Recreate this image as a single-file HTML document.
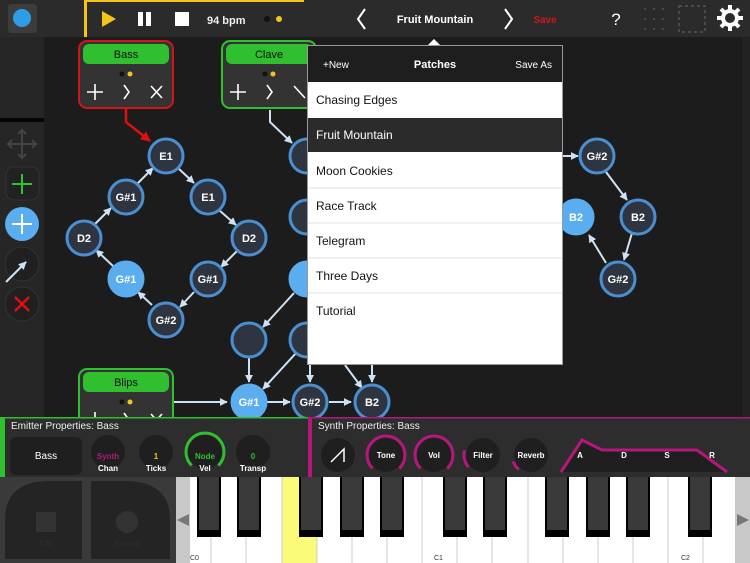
<!DOCTYPE html>
<html><head><meta charset="utf-8"><style>
html,body{margin:0;padding:0;background:#1c1c1c;width:750px;height:563px;overflow:hidden}
svg text{font-family:"Liberation Sans",sans-serif}
</style></head><body>
<svg width="750" height="563" viewBox="0 0 750 563" xmlns="http://www.w3.org/2000/svg">
<defs>
<marker id="a" viewBox="0 0 10 10" refX="9" refY="5" markerWidth="4" markerHeight="4" orient="auto"><path d="M0 0L10 5L0 10z" fill="#cfe2f3"/></marker>
<marker id="r" viewBox="0 0 10 10" refX="9" refY="5" markerWidth="4" markerHeight="4" orient="auto"><path d="M0 0L10 5L0 10z" fill="#e01010"/></marker>
</defs>
<rect width="750" height="563" fill="#1c1c1c"/>
<!-- top bar -->
<rect width="750" height="37" fill="#2b2b2b"/>
<rect x="8" y="4" width="29" height="29" rx="3" fill="#3c3c3c"/>
<circle cx="22" cy="18" r="9" fill="#2f9ce6"/>
<rect x="84" y="0" width="3" height="37" fill="#f2c518"/>
<rect x="84" y="0" width="220" height="2" fill="#f2c518"/>
<path d="M102 11L116 19L102 27z" fill="#f2c518"/>
<rect x="138" y="12" width="5" height="14" fill="#fff"/><rect x="146" y="12" width="5" height="14" fill="#fff"/>
<rect x="175" y="12" width="14" height="14" fill="#fff"/>
<text x="207" y="24" font-size="11" font-weight="bold" fill="#eee">94 bpm</text>
<circle cx="267" cy="19" r="3" fill="#111"/><circle cx="279" cy="19" r="3" fill="#f2c518"/>
<path d="M365 9L358 19L365 29" stroke="#fff" stroke-width="2" fill="none"/>
<text x="435" y="23" font-size="11" font-weight="bold" fill="#fff" text-anchor="middle">Fruit Mountain</text>
<path d="M505 9L512 19L505 29" stroke="#fff" stroke-width="2" fill="none"/>
<text x="545" y="23" font-size="10" font-weight="bold" fill="#d0161a" text-anchor="middle">Save</text>
<text x="616" y="25" font-size="17" fill="#fff" text-anchor="middle">?</text>
<g fill="#555"><circle cx="645" cy="9" r="1"/><circle cx="654" cy="9" r="1"/><circle cx="663" cy="9" r="1"/><circle cx="645" cy="19" r="1"/><circle cx="654" cy="19" r="1"/><circle cx="663" cy="19" r="1"/><circle cx="645" cy="29" r="1"/><circle cx="654" cy="29" r="1"/><circle cx="663" cy="29" r="1"/></g>
<rect x="679" y="6" width="26" height="26" fill="none" stroke="#555" stroke-width="1.5" stroke-dasharray="3 3"/>
<g transform="translate(730 18)" fill="#fff"><circle r="9"/><g stroke="#fff" stroke-width="4"><path d="M0 -13V13M-13 0H13M-9 -9L9 9M-9 9L9 -9"/></g><circle r="5" fill="#2b2b2b"/></g>
<!-- left toolbar -->
<rect x="0" y="37" width="44" height="380" fill="#262626"/>
<rect x="0" y="118" width="44" height="4" fill="#050505"/>
<g stroke="#444" stroke-width="2" fill="none"><path d="M22 130V158M8 144H36M18 134L22 130L26 134M18 154L22 158L26 154M12 140L8 144L12 148M32 140L36 144L32 148"/></g>
<rect x="6" y="167" width="33" height="33" rx="8" fill="#222" stroke="#333"/>
<path d="M22 174V194M12 184H32" stroke="#2fc42f" stroke-width="2"/>
<circle cx="22" cy="224" r="17" fill="#5aaef0"/>
<path d="M22 214V234M12 224H32" stroke="#fff" stroke-width="2"/>
<circle cx="22" cy="264" r="17" fill="#202020" stroke="#333"/>
<path d="M6 282L26 262" stroke="#cfe2f3" stroke-width="2" marker-end="url(#a)"/>
<circle cx="22" cy="304" r="17" fill="#202020" stroke="#333"/>
<path d="M15 297L29 311M29 297L15 311" stroke="#e01010" stroke-width="2.5"/>
<!-- edges -->
<g stroke="#cfe2f3" stroke-width="2" fill="none" marker-end="url(#a)">
<path d="M178 168L194 183"/><path d="M137 184L153 168"/><path d="M219 210L236 225"/><path d="M95 224L111 208"/>
<path d="M237 251L221 267"/><path d="M152 305L138 292"/><path d="M194 292L180 307"/><path d="M113 266L96 250"/>
<path d="M270 110V122L292 143"/><path d="M174 402H227"/><path d="M267 402H290"/><path d="M329 402H351"/>
<path d="M249 358V382"/><path d="M294 293L263 327"/><path d="M297 352L263 389"/><path d="M310 365V382"/><path d="M372 365V382"/><path d="M345 365L362 388"/>
<path d="M562 156H578"/><path d="M606 172L627 200"/><path d="M632 233L624 260"/><path d="M606 263L589 235"/>
</g>
<path d="M126 108V122L150 141" stroke="#e01010" stroke-width="2.5" fill="none" marker-end="url(#r)"/>
<!-- nodes -->
<g font-size="11" fill="#fff" text-anchor="middle" font-weight="bold">
<g stroke="#4a8fd0" stroke-width="3" fill="#2f3540">
<circle cx="166" cy="156" r="17"/><circle cx="126" cy="197" r="17"/><circle cx="208" cy="197" r="17"/><circle cx="84" cy="238" r="17"/><circle cx="249" cy="238" r="17"/><circle cx="208" cy="279" r="17"/><circle cx="166" cy="320" r="17"/><circle cx="249" cy="340" r="17"/><circle cx="310" cy="402" r="17"/><circle cx="372" cy="402" r="17"/><circle cx="307" cy="156" r="17"/><circle cx="307" cy="217" r="17"/><circle cx="307" cy="340" r="17"/><circle cx="597" cy="156" r="17"/><circle cx="638" cy="217" r="17"/><circle cx="618" cy="279" r="17"/>
</g>
<g fill="#5aaef0" stroke="#5aaef0" stroke-width="3"><circle cx="126" cy="279" r="17"/><circle cx="249" cy="402" r="17"/><circle cx="307" cy="279" r="17"/><circle cx="576" cy="217" r="17"/></g>
<text x="166" y="160">E1</text><text x="126" y="201">G#1</text><text x="208" y="201">E1</text><text x="84" y="242">D2</text><text x="249" y="242">D2</text><text x="126" y="283">G#1</text><text x="208" y="283">G#1</text><text x="166" y="324">G#2</text><text x="249" y="406">G#1</text><text x="310" y="406">G#2</text><text x="372" y="406">B2</text><text x="597" y="160">G#2</text><text x="576" y="221">B2</text><text x="638" y="221">B2</text><text x="618" y="283">G#2</text>
</g>
<!-- emitters -->
<g>
<rect x="79" y="41" width="94" height="67" rx="8" fill="#333" stroke="#d0161a" stroke-width="2"/>
<rect x="83" y="44" width="86" height="20" rx="6" fill="#2fbf2f"/>
<text x="126" y="58" font-size="11" text-anchor="middle" fill="#111">Bass</text>
<circle cx="122" cy="74" r="2.5" fill="#111"/><circle cx="130" cy="74" r="2.5" fill="#f2c518"/>
<g stroke="#fff" stroke-width="1.6" fill="none"><path d="M95 84V100M87 92H103M124 85L129 92L124 99M151 86L162 98M162 86L151 98"/></g>
<rect x="222" y="41" width="94" height="67" rx="8" fill="#333" stroke="#2fbf2f" stroke-width="2"/>
<rect x="226" y="44" width="86" height="20" rx="6" fill="#2fbf2f"/>
<text x="269" y="58" font-size="11" text-anchor="middle" fill="#111">Clave</text>
<circle cx="265" cy="74" r="2.5" fill="#111"/><circle cx="273" cy="74" r="2.5" fill="#f2c518"/>
<g stroke="#fff" stroke-width="1.6" fill="none"><path d="M238 84V100M230 92H246M267 85L272 92L267 99M294 86L305 98"/></g>
<rect x="79" y="369" width="94" height="67" rx="8" fill="#333" stroke="#2fbf2f" stroke-width="2"/>
<rect x="83" y="372" width="86" height="20" rx="6" fill="#2fbf2f"/>
<text x="126" y="386" font-size="11" text-anchor="middle" fill="#111">Blips</text>
<circle cx="122" cy="402" r="2.5" fill="#111"/><circle cx="130" cy="402" r="2.5" fill="#f2c518"/>
<g stroke="#fff" stroke-width="1.6" fill="none"><path d="M95 412V428M87 420H103M124 413L129 420L124 427M151 414L162 426M162 414L151 426"/></g>
</g>
<!-- patches menu -->
<path d="M428 45L434 39L440 45z" fill="#fff"/>
<rect x="307.5" y="45.5" width="255" height="319" fill="#fff" stroke="#999"/>
<rect x="308" y="46" width="254" height="36" fill="#1e1e1e"/>
<text x="323" y="68" font-size="10" fill="#fff">+New</text>
<text x="435" y="68" font-size="11" font-weight="bold" fill="#fff" text-anchor="middle">Patches</text>
<text x="552" y="68" font-size="10" fill="#fff" text-anchor="end">Save As</text>
<rect x="308" y="118" width="254" height="34" fill="#2b2b2b"/>
<g stroke="#e2e2e2"><path d="M308 188H562M308 223H562M308 258H562M308 293H562"/></g>
<g font-size="12" fill="#111"><text x="316" y="104">Chasing Edges</text><text x="316" y="139" fill="#fff">Fruit Mountain</text><text x="316" y="175">Moon Cookies</text><text x="316" y="210">Race Track</text><text x="316" y="245">Telegram</text><text x="316" y="280">Three Days</text><text x="316" y="315">Tutorial</text></g>
<rect x="742" y="37" width="8" height="380" fill="#222"/>
<!-- bottom panels -->
<rect x="0" y="417" width="750" height="60" fill="#2d2d2d"/>
<rect x="0" y="417" width="308" height="1.5" fill="#2fbf2f"/><rect x="0" y="417" width="5" height="60" fill="#2fbf2f"/>
<rect x="308" y="417" width="442" height="1.5" fill="#b5177d"/><rect x="308" y="417" width="4" height="60" fill="#b5177d"/>
<text x="11" y="429" font-size="10" fill="#eee">Emitter Properties: Bass</text>
<text x="318" y="429" font-size="10" fill="#eee">Synth Properties: Bass</text>
<rect x="10" y="437" width="72" height="38" rx="6" fill="#1f1f1f"/>
<text x="46" y="459" font-size="10" fill="#fff" text-anchor="middle">Bass</text>
<g fill="#1f1f1f"><circle cx="108" cy="452" r="17"/><circle cx="156" cy="452" r="17"/><circle cx="205" cy="452" r="17"/><circle cx="253" cy="452" r="17"/></g>
<circle cx="205" cy="452" r="19" fill="none" stroke="#2fbf2f" stroke-width="3" stroke-dasharray="89.5 200" transform="rotate(135 205 452)"/>
<g font-size="8" font-weight="bold" text-anchor="middle"><text x="108" y="459" fill="#b5177d">Synth</text><text x="156" y="459" fill="#f2c518">1</text><text x="205" y="459" fill="#2fbf2f">Node</text><text x="253" y="459" fill="#2fbf2f">0</text>
<g fill="#fff"><text x="108" y="471">Chan</text><text x="156" y="471">Ticks</text><text x="205" y="471">Vel</text><text x="253" y="471">Transp</text></g></g>
<g fill="#1f1f1f"><circle cx="338" cy="455" r="17"/><circle cx="386" cy="455" r="17"/><circle cx="434" cy="455" r="17"/><circle cx="483" cy="455" r="17"/><circle cx="531" cy="455" r="17"/></g>
<g fill="none" stroke="#b5177d" stroke-width="3">
<circle cx="386" cy="455" r="19" stroke-dasharray="89.5 200" transform="rotate(135 386 455)"/>
<circle cx="434" cy="455" r="19" stroke-dasharray="89.5 200" transform="rotate(135 434 455)"/>
<circle cx="483" cy="455" r="19" stroke-dasharray="18 200" transform="rotate(140 483 455)"/>
<circle cx="531" cy="455" r="19" stroke-dasharray="10 200" transform="rotate(130 531 455)"/>
</g>
<path d="M331 462L344 449V462" stroke="#fff" stroke-width="1.5" fill="none"/>
<path d="M561 472L582 440L602 450H697L727 472z" fill="#1f1f1f"/>
<path d="M561 472L582 440L602 450H697L727 472" stroke="#b5177d" stroke-width="3" fill="none"/>
<g font-size="8" font-weight="bold" fill="#fff" text-anchor="middle"><text x="386" y="458">Tone</text><text x="434" y="458">Vol</text><text x="483" y="458">Filter</text><text x="531" y="458">Reverb</text><text x="580" y="458">A</text><text x="624" y="458">D</text><text x="667" y="458">S</text><text x="712" y="458">R</text></g>
<!-- bottom left pads -->
<rect x="0" y="477" width="176" height="86" fill="#3a3a3a"/>
<path d="M5 559V520Q5 481 50 481H82V559z" fill="#242424"/>
<path d="M91 559V481H125Q170 481 170 520V559z" fill="#242424"/>
<rect x="36" y="512" width="20" height="20" fill="#333"/><circle cx="127" cy="522" r="11" fill="#333"/>
<text x="46" y="546" font-size="8" fill="#2e2e2e" text-anchor="middle">Edit</text><text x="127" y="546" font-size="8" fill="#2e2e2e" text-anchor="middle">Record</text>
<!-- piano -->
<rect x="176" y="477" width="574" height="86" fill="#fff"/>
<rect x="282" y="477" width="35" height="86" fill="#fbfb7a"/>
<g stroke="#ccc"><path d="M211 477V563M246 477V563M282 477V563M317 477V563M352 477V563M387 477V563M422 477V563M457 477V563M492 477V563M528 477V563M563 477V563M598 477V563M633 477V563M668 477V563M703 477V563"/></g>
<g fill="#000"><rect x="197" y="477" width="24" height="60"/><rect x="237" y="477" width="24" height="60"/><rect x="299" y="477" width="24" height="60"/><rect x="340" y="477" width="24" height="60"/><rect x="380" y="477" width="24" height="60"/><rect x="443" y="477" width="24" height="60"/><rect x="483" y="477" width="24" height="60"/><rect x="545" y="477" width="24" height="60"/><rect x="586" y="477" width="24" height="60"/><rect x="626" y="477" width="24" height="60"/><rect x="688" y="477" width="24" height="60"/></g>
<g fill="#3a3a3a"><rect x="199" y="477" width="20" height="53"/><rect x="239" y="477" width="20" height="53"/><rect x="301" y="477" width="20" height="53"/><rect x="342" y="477" width="20" height="53"/><rect x="382" y="477" width="20" height="53"/><rect x="445" y="477" width="20" height="53"/><rect x="485" y="477" width="20" height="53"/><rect x="547" y="477" width="20" height="53"/><rect x="588" y="477" width="20" height="53"/><rect x="628" y="477" width="20" height="53"/><rect x="690" y="477" width="20" height="53"/></g>
<rect x="176" y="477" width="14" height="86" fill="#c8c8c8"/><path d="M177 520L189 514V526z" fill="#777"/>
<rect x="735" y="477" width="15" height="86" fill="#c8c8c8"/><path d="M749 520L737 514V526z" fill="#777"/>
<g font-size="7" fill="#333"><text x="190" y="560">C0</text><text x="434" y="560">C1</text><text x="681" y="560">C2</text></g>
</svg>
</body></html>
